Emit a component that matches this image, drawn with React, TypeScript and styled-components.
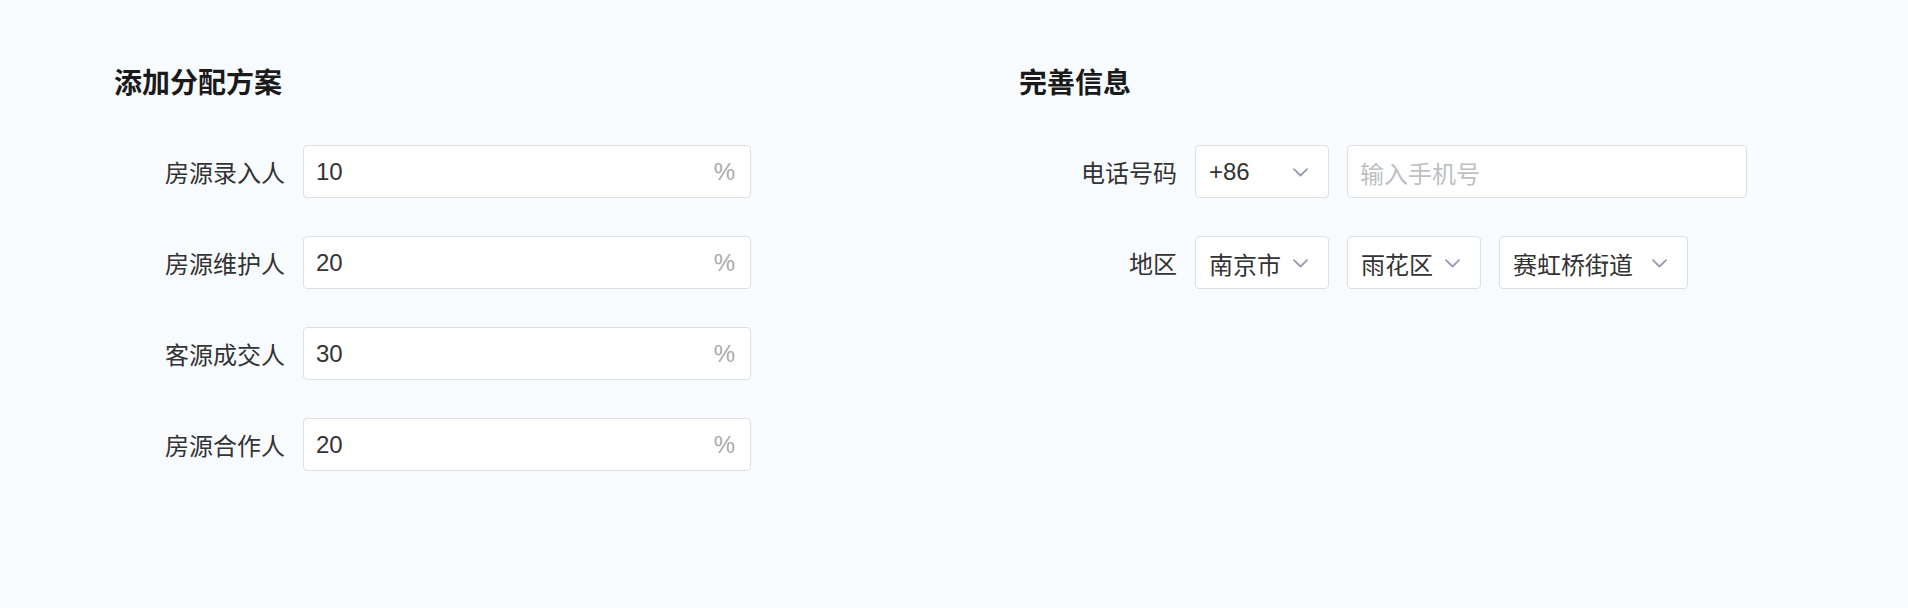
import styled, { createGlobalStyle } from 'styled-components';

const GlobalStyle = createGlobalStyle`
  html, body {
    margin: 0;
    padding: 0;
    background: #f8fbfe;
  }

  body {
    font-family: "Liberation Sans", "Noto Sans CJK SC", sans-serif;
    color: #333;
  }
`;

const StyledPage = styled.div`
  display: flex;
  width: 1908px;
  height: 608px;
  box-sizing: border-box;
  padding: 67px 0 0 114px;
  background: #f8fbfe;
`;

const StyledSection = styled.section<{ $width?: number }>`
  width: ${props => (props.$width ? `${props.$width}px` : 'auto')};
  flex: ${props => (props.$width ? 'none' : '1')};
`;

const StyledTitle = styled.h2`
  margin: 0 0 50px;
  font-family: "Noto Sans CJK SC", sans-serif;
  font-size: 28px;
  line-height: 28px;
  font-weight: 700;
  color: #1a1a1a;
`;

const StyledForm = styled.div<{ $indent: number }>`
  display: flex;
  flex-direction: column;
  gap: 38px;
  padding-left: ${props => props.$indent}px;
`;

const StyledRow = styled.div`
  display: flex;
  align-items: center;
  gap: 18px;
`;

const StyledLabel = styled.label`
  width: 120px;
  text-align: right;
  font-family: "Noto Sans CJK SC", sans-serif;
  font-size: 24px;
  line-height: 53px;
  color: #333;
  white-space: nowrap;
`;

const StyledBox = styled.div<{ $width: number }>`
  display: flex;
  align-items: center;
  justify-content: space-between;
  width: ${props => props.$width}px;
  height: 53px;
  box-sizing: border-box;
  padding: 1px 15px 0 12px;
  background: #fff;
  border: 1px solid #dcdfe4;
  border-radius: 4px;
  color: #333;
`;

const StyledSelect = styled(StyledBox)`
  padding: 1px 20px 0 13px;
`;

const StyledValue = styled.span`
  font-size: 24px;
`;

const StyledOption = styled.span`
  font-family: "Noto Sans CJK SC", sans-serif;
  font-size: 24px;
`;

const StyledPlaceholder = styled.span`
  font-family: "Noto Sans CJK SC", sans-serif;
  font-size: 24px;
  color: #bcbfc4;
`;

const StyledUnit = styled.span`
  font-size: 24px;
  color: #aaa;
`;

const StyledFields = styled.div`
  display: flex;
  gap: 18px;
`;

function Chevron() {
  return (
    <svg width="15" height="9" viewBox="0 0 15 9" fill="none">
      <polyline
        points="1,1.2 7.5,7.5 14,1.2"
        stroke="#939cae"
        strokeWidth="1.8"
        strokeLinecap="round"
        strokeLinejoin="round"
      />
    </svg>
  );
}

const shares = [
  { label: '房源录入人', value: '10' },
  { label: '房源维护人', value: '20' },
  { label: '客源成交人', value: '30' },
  { label: '房源合作人', value: '20' },
];

const regions = [
  { name: '南京市', width: 134 },
  { name: '雨花区', width: 134 },
  { name: '赛虹桥街道', width: 189 },
];

export default function App() {
  return (
    <>
      <GlobalStyle />
      <StyledPage>
        <StyledSection $width={905}>
          <StyledTitle>添加分配方案</StyledTitle>
          <StyledForm $indent={51}>
            {shares.map(share => (
              <StyledRow key={share.label}>
                <StyledLabel>{share.label}</StyledLabel>
                <StyledBox $width={448}>
                  <StyledValue>{share.value}</StyledValue>
                  <StyledUnit>%</StyledUnit>
                </StyledBox>
              </StyledRow>
            ))}
          </StyledForm>
        </StyledSection>
        <StyledSection>
          <StyledTitle>完善信息</StyledTitle>
          <StyledForm $indent={38}>
            <StyledRow>
              <StyledLabel>电话号码</StyledLabel>
              <StyledFields>
                <StyledSelect $width={134}>
                  <StyledValue>+86</StyledValue>
                  <Chevron />
                </StyledSelect>
                <StyledBox $width={400}>
                  <StyledPlaceholder>输入手机号</StyledPlaceholder>
                </StyledBox>
              </StyledFields>
            </StyledRow>
            <StyledRow>
              <StyledLabel>地区</StyledLabel>
              <StyledFields>
                {regions.map(region => (
                  <StyledSelect key={region.name} $width={region.width}>
                    <StyledOption>{region.name}</StyledOption>
                    <Chevron />
                  </StyledSelect>
                ))}
              </StyledFields>
            </StyledRow>
          </StyledForm>
        </StyledSection>
      </StyledPage>
    </>
  );
}
